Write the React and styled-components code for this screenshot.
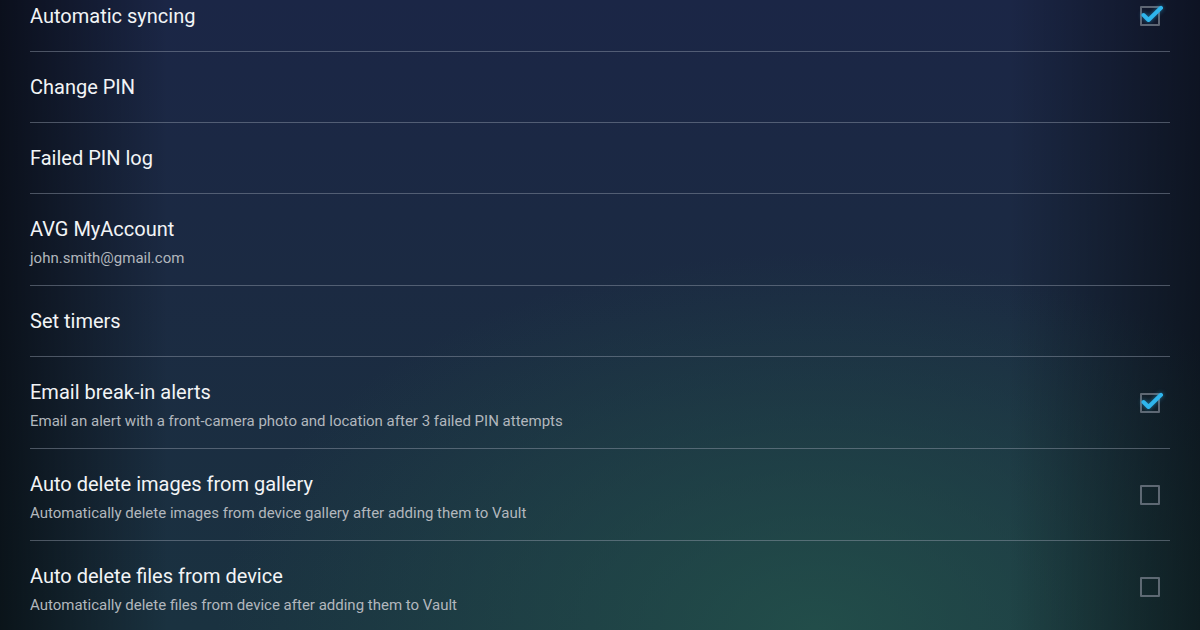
import styled, { createGlobalStyle } from 'styled-components';

const GlobalStyle = createGlobalStyle`
  html, body {
    margin: 0;
    padding: 0;
    background: #0b1018;
  }
  body {
    font-family: Roboto, "Noto Sans", sans-serif;
  }
`;

const settings = [
  { title: 'Automatic syncing', checked: true },
  { title: 'Change PIN' },
  { title: 'Failed PIN log' },
  { title: 'AVG MyAccount', summary: 'john.smith@gmail.com' },
  { title: 'Set timers' },
  {
    title: 'Email break-in alerts',
    summary: 'Email an alert with a front-camera photo and location after 3 failed PIN attempts',
    checked: true,
  },
  {
    title: 'Auto delete images from gallery',
    summary: 'Automatically delete images from device gallery after adding them to Vault',
    checked: false,
  },
  {
    title: 'Auto delete files from device',
    summary: 'Automatically delete files from device after adding them to Vault',
    checked: false,
  },
];

function CheckBox({ checked }) {
  return (
    <Box>
      {checked && (
        <CheckMark viewBox="0 0 26 22" aria-hidden="true">
          <path
            d="M3.5 9 L8.5 14 L21 1.8"
            fill="none"
            stroke="#2fb5ec"
            strokeWidth="4"
            strokeLinecap="round"
            strokeLinejoin="round"
          />
        </CheckMark>
      )}
    </Box>
  );
}

function App() {
  return (
    <>
      <GlobalStyle />
      <Screen>
        <List>
          {settings.map((item) => (
            <Row key={item.title} $tall={!!item.summary}>
              <Texts>
                <Title>{item.title}</Title>
                {item.summary && <Summary>{item.summary}</Summary>}
              </Texts>
              {item.checked !== undefined && <CheckBox checked={item.checked} />}
            </Row>
          ))}
        </List>
      </Screen>
    </>
  );
}

const Screen = styled.div`
  width: 1200px;
  height: 630px;
  overflow: hidden;
  background:
    linear-gradient(90deg, rgba(0, 0, 0, 0.6) 0%, rgba(0, 0, 0, 0) 14%, rgba(0, 0, 0, 0) 84%, rgba(0, 0, 0, 0.5) 100%),
    radial-gradient(ellipse 50% 60% at 68% 100%, rgba(36, 84, 76, 0.8) 0%, rgba(36, 84, 76, 0) 100%),
    linear-gradient(180deg, #1b2646 0%, #1b2a42 45%, #1a3240 100%);
`;

const List = styled.div`
  margin-top: -19px;
  padding: 0 30px;
  display: flex;
  flex-direction: column;
`;

const Row = styled.div`
  box-sizing: border-box;
  height: ${(p) => (p.$tall ? 92 : 71)}px;
  display: flex;
  align-items: center;
  justify-content: space-between;
  border-bottom: 1px solid rgba(150, 160, 175, 0.45);
`;

const Texts = styled.div`
  align-self: flex-start;
  padding-top: 24px;
  display: flex;
  flex-direction: column;
  gap: 8px;
`;

const Title = styled.div`
  font-size: 20px;
  line-height: 23px;
  color: #f2f4f6;
`;

const Summary = styled.div`
  font-size: 15px;
  line-height: 18px;
  color: #b2b7bd;
`;

const Box = styled.div`
  position: relative;
  width: 16px;
  height: 16px;
  margin-right: 10px;
  border: 2px solid rgba(120, 128, 140, 0.75);
  border-radius: 1px;
`;

const CheckMark = styled.svg`
  position: absolute;
  left: -2px;
  top: -2px;
  width: 26px;
  height: 22px;
  overflow: visible;
  filter: drop-shadow(0 0 2px rgba(47, 181, 236, 0.55));
`;

export default App;
